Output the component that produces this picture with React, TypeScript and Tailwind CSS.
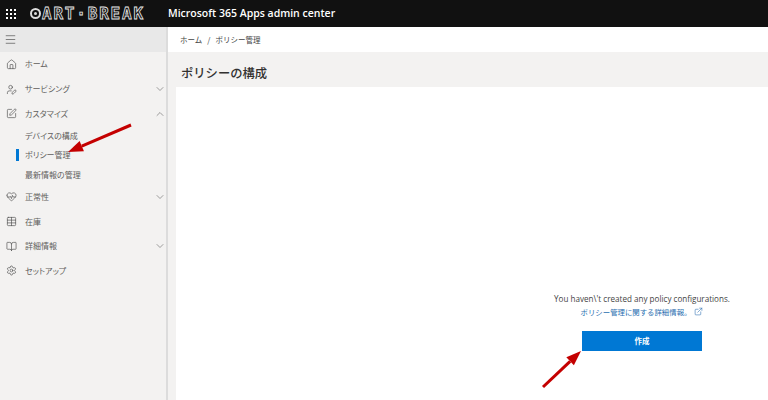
import { ChevronDown, ChevronUp, Home, Menu, Settings, HeartPulse, Table, BookOpen, UserPen, SquarePen, ExternalLink } from 'lucide-react'

function NavRow({ icon, label, chevron }: { icon: React.ReactNode; label: string; chevron?: 'up' | 'down' }) {
  return (
    <div className="flex items-center h-[24.7px] pl-[5px] text-[#605e5c]">
      <span className="w-[12px] flex justify-center text-[#555]">{icon}</span>
      <span className="ml-[8px] flex-1 text-[8px] [font-feature-settings:'palt']">{label}</span>
      {chevron === 'down' && <ChevronDown size={12} strokeWidth={1.4} className="text-[#777]" />}
      {chevron === 'up' && <ChevronUp size={12} strokeWidth={1.4} className="text-[#777]" />}
    </div>
  )
}

function SubRow({ label, active }: { label: string; active?: boolean }) {
  return (
    <div className="flex items-center h-[19.5px] pl-[16px] text-[8px] [font-feature-settings:'palt'] text-[#605e5c]">
      <span className={active ? 'w-[3px] h-[12px] bg-[#0078d4]' : 'w-[3px]'} />
      <span className="ml-[6px]">{label}</span>
    </div>
  )
}

function Arrow({ x1, y1, x2, y2 }: { x1: number; y1: number; x2: number; y2: number }) {
  const ang = Math.atan2(y2 - y1, x2 - x1)
  const len = 15
  const hw = 5.5
  const bx = x2 - Math.cos(ang) * len
  const by = y2 - Math.sin(ang) * len
  const nx = -Math.sin(ang) * hw
  const ny = Math.cos(ang) * hw
  return (
    <svg className="absolute inset-0 pointer-events-none" width="768" height="400" viewBox="0 0 768 400">
      <line x1={x1} y1={y1} x2={bx} y2={by} stroke="#c40000" strokeWidth="3" />
      <polygon points={`${x2},${y2} ${bx + nx},${by + ny} ${bx - nx},${by - ny}`} fill="#c40000" />
    </svg>
  )
}

export default function App() {
  return (
    <div className="relative w-[768px] h-[400px] overflow-hidden bg-white flex flex-col font-['Noto_Sans_CJK_JP','Open_Sans',sans-serif]">
      <header className="h-[27px] bg-[#111111] flex items-center text-white shrink-0">
        <div className="ml-[6px] w-[10px] grid grid-cols-3 gap-[2px]">
          {Array.from({ length: 9 }).map((_, i) => (
            <span key={i} className="w-[2px] h-[2px] bg-white" />
          ))}
        </div>
        <div className="ml-[14px] w-[117px] flex items-center">
          <span className="w-[11px] h-[11px] rounded-full border-2 border-[#ddd] flex items-center justify-center shrink-0">
            <span className="w-[3px] h-[3px] rounded-full bg-[#ddd]" />
          </span>
          <span className="ml-[1px] font-['DejaVu_Sans_Mono',monospace] text-[16px] leading-none font-bold tracking-[1.8px] text-transparent [-webkit-text-stroke:0.8px_#e8e8e8] whitespace-nowrap">ART·BREAK</span>
        </div>
        <span className="ml-[21px] text-[10.5px] font-semibold font-['Open_Sans',sans-serif]">Microsoft 365 Apps admin center</span>
      </header>

      <div className="flex-1 flex min-h-0">
        <aside className="w-[168px] bg-[#f3f2f1] border-r-2 border-[#dcdcdc] shrink-0">
          <div className="h-[25px] bg-[#e8e8e8] flex items-center pl-[4px]">
            <Menu size={13} strokeWidth={1.5} className="text-[#666]" />
          </div>
          <NavRow icon={<Home size={11} strokeWidth={1.5} />} label="ホーム" />
          <NavRow icon={<UserPen size={11} strokeWidth={1.5} />} label="サービシング" chevron="down" />
          <NavRow icon={<SquarePen size={11} strokeWidth={1.5} />} label="カスタマイズ" chevron="up" />
          <SubRow label="デバイスの構成" />
          <SubRow label="ポリシー管理" active />
          <SubRow label="最新情報の管理" />
          <NavRow icon={<HeartPulse size={11} strokeWidth={1.5} />} label="正常性" chevron="down" />
          <NavRow icon={<Table size={11} strokeWidth={1.5} />} label="在庫" />
          <NavRow icon={<BookOpen size={11} strokeWidth={1.5} />} label="詳細情報" chevron="down" />
          <NavRow icon={<Settings size={11} strokeWidth={1.5} />} label="セットアップ" />
        </aside>

        <main className="flex-1 flex flex-col min-w-0">
          <div className="h-[25px] pl-[12px] flex items-center text-[7.5px] text-[#444] shrink-0">
            <span>ホーム</span>
            <span className="mx-[5px] text-[8px]">/</span>
            <span>ポリシー管理</span>
          </div>
          <div className="h-[35px] bg-[#f3f2f1] pl-[13px] pt-[7px] flex items-center text-[12.3px] font-medium text-[#323130] shrink-0">ポリシーの構成</div>
          <div className="flex-1 flex">
            <div className="w-[8px] shrink-0 bg-[#f3f2f1]" />
            <div className="flex-1 flex justify-end pt-[206px] pr-[38px]">
              <div className="w-[176px] flex flex-col items-center">
                <p className="text-[8.1px] leading-[12.5px] text-[#444] font-['Open_Sans',sans-serif] whitespace-nowrap">You haven\'t created any policy configurations.</p>
                <a className="flex items-center text-[7.4px] leading-[12.5px] text-[#2a6fb0] whitespace-nowrap">
                  ポリシー管理に関する詳細情報。
                  <ExternalLink size={9} strokeWidth={1.5} className="ml-[3px]" />
                </a>
                <button className="mt-[13px] w-[120px] h-[20px] bg-[#0078d4] text-white text-[7.5px] font-bold shrink-0">作成</button>
              </div>
            </div>
          </div>
        </main>
      </div>

      <Arrow x1={131} y1={125} x2={68} y2={152} />
      <Arrow x1={543} y1={387} x2={581} y2={351} />
    </div>
  )
}
